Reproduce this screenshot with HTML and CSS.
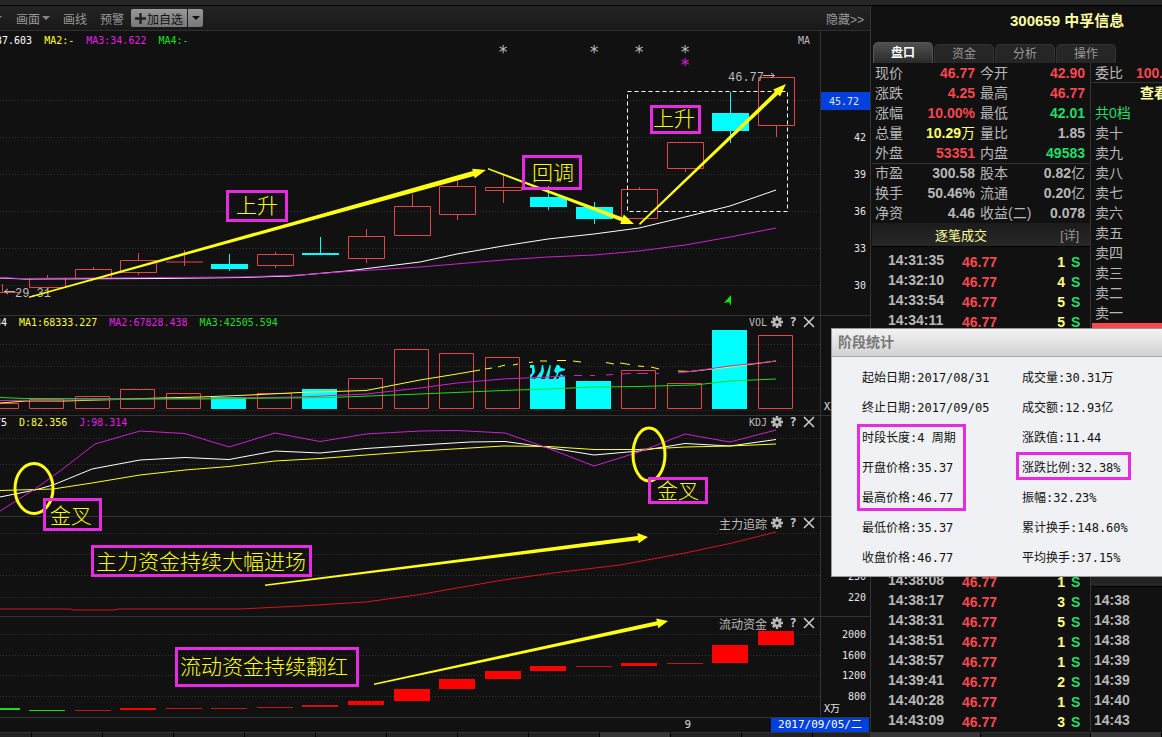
FILE: index.html
```
<!DOCTYPE html>
<html lang="zh-CN">
<head>
<meta charset="utf-8">
<title>300659 中孚信息</title>
<link rel="stylesheet" href="styles.css">
</head>
<body>
<svg class="defs" width="0" height="0" aria-hidden="true">
  <symbol id="gear" viewBox="0 0 12 12">
    <g stroke="#b8b8b8" stroke-width="2.4"><path d="M6 0V12M0 6H12M1.8 1.8L10.2 10.2M10.2 1.8L1.8 10.2"/></g>
    <circle cx="6" cy="6" r="4" fill="#b8b8b8"/><circle cx="6" cy="6" r="1.6" fill="#111"/>
  </symbol>
  <symbol id="close" viewBox="0 0 12 12"><path d="M1 1L11 11M11 1L1 11" stroke="#d0d0d0" stroke-width="1.5"/></symbol>
</svg>
<div class="app">
  <div class="strip"></div>
  <div class="workspace">
    <main class="left">
      <nav class="toolbar">
        <button class="tool first" aria-label="更多"><i class="caret"></i></button>
        <button class="tool draw">画面<i class="caret"></i></button>
        <button class="tool line">画线</button>
        <button class="tool">预警</button>
        <div class="split"><button class="add"><svg width="11" height="11" viewBox="0 0 11 11"><path d="M5.5 0V11M0 5.5H11" stroke="#222" stroke-width="2.4"/></svg>加自选</button><button class="drop" aria-label="选择分组"><i class="caret dark"></i></button></div>
        <button class="tool hide">隐藏&gt;&gt;</button>
      </nav>
      <div class="chart">
        <section class="pane">
          <div class="plot">
            <svg class="canvas tall" viewBox="0 31 820 284" preserveAspectRatio="xMaxYMin meet">
              <path class="grid" d="M0 100.5H820M0 137.5H820M0 174.5H820M0 211.5H820M0 248.5H820M0 285.5H820"/>
              <g class="up">
                <path d="M0 292.5H20M2.5 284V292"/>
                <path d="M29.500 278.500H65.500V287.500H29.500ZM47.500 275V278"/>
                <path d="M75.500 269.500H111.500V278.500H75.500ZM93.500 267V269"/>
                <path d="M120.500 260.500H156.500V272.500H120.500ZM138.500 253V260M138.500 273V275"/>
                <path d="M166 262H203M184.500 250V266"/>
                <path d="M257.500 254.500H293.500V265.500H257.500ZM275.500 252V254M275.500 266V268"/>
                <path d="M348.500 236.500H384.500V258.500H348.500ZM366.500 229V236M366.500 259V263"/>
                <path d="M394.500 206.500H430.500V235.500H394.500ZM412.500 194V206"/>
                <path d="M439.500 186.500H475.500V214.500H439.500ZM457.500 178V186M457.500 215V220"/>
                <path d="M485.500 187.500H521.500V190.500H485.500ZM503.500 175V187M503.500 191V203"/>
                <path d="M621.500 189.500H657.500V218.500H621.500ZM639.500 187V189"/>
                <path d="M667.500 142.500H703.500V168.500H667.500ZM685.500 169V172"/>
                <path d="M758.500 77.500H794.500V125.500H758.500ZM776.500 126V137"/>
              </g>
              <g class="down">
                <path d="M211 264H248V269H211ZM229 254H230V271H229Z"/>
                <path d="M302 253H339V255H302ZM320 237H321V254H320Z"/>
                <path d="M530 197H567V207H530ZM548 186H549V210H548Z"/>
                <path d="M576 207H613V219H576ZM594 202H595V224H594Z"/>
                <path d="M712 113H749V131H712ZM730 92H731V143H730Z"/>
              </g>
              <polyline class="ln white" points="0,278 25,279 160,278.500 240,277.500 290,276 347,271 420,262 457,254 503,246 548,239 594,234 639,228 685,217 730,206 776,190"/>
              <polyline class="ln violet" points="0,277.500 20,278.500 240,277 300,275 340,272 420,267 503,260 548,257 594,255 639,251 685,245 730,237 776,228"/>
              <g class="star"><text x="498" y="58">*</text><text x="589" y="58">*</text><text x="634" y="58">*</text><text x="680" y="58">*</text><text class="vio" x="680" y="71">*</text></g>
              <text class="mark" x="728" y="81">46.77</text><path class="markline" d="M763 75.500H774M771 73L774.500 75.500L771 78"/>
              <text class="mark" x="15" y="297">29.31</text><path class="markline" d="M15 291.500H4M8 289L4.500 291.500L8 294"/>
              <path d="M731 295V306L729 302L724 303Z" fill="#00f000"/>
            </svg>
            <header class="legend"><span class="cw cut3">37.603</span><span class="cy">MA2:-</span><span class="cm">MA3:34.622</span><span class="cg">MA4:-</span><b class="name end">MA</b></header>
          </div>
          <svg class="axis tall" viewBox="0 31 49 284">
            <rect x="0" y="92" width="49" height="18" fill="#0040dc"/>
            <text x="38" y="105">45.72</text><text x="45" y="141">42</text><text x="45" y="178">39</text><text x="45" y="215">36</text><text x="45" y="252">33</text><text x="45" y="289">30</text>
          </svg>
        </section>
        <section class="pane">
          <div class="plot">
            <svg class="canvas low" viewBox="0 316 820 99" preserveAspectRatio="xMaxYMin meet">
              <path class="grid" d="M0 344.500H820M0 366.500H820M0 388.500H820M0 410.500H820"/>
              <g class="up">
                <path d="M-16 403.500H18.500V408.500H-16Z"/><path d="M29.500 399.500H63.500V408.500H29.500Z"/>
                <path d="M75.500 396.500H109.500V408.500H75.500Z"/><path d="M120.500 389.500H154.500V408.500H120.500Z"/>
                <path d="M166.500 393.500H200.500V408.500H166.500Z"/><path d="M257.500 393.500H291.500V408.500H257.500Z"/>
                <path d="M348.500 378.500H382.500V408.500H348.500Z"/><path d="M394.500 349.500H428.500V408.500H394.500Z"/>
                <path d="M439.500 353.500H473.500V408.500H439.500Z"/><path d="M485.500 357.500H519.500V408.500H485.500Z"/>
                <path d="M621.500 370.500H655.500V408.500H621.500Z"/><path d="M667.500 383.500H701.500V408.500H667.500Z"/>
                <path d="M758.500 335.500H792.500V408.500H758.500Z"/>
              </g>
              <path class="down" d="M211 397H246V409H211ZM302 389H337V409H302ZM530 365H565V409H530ZM576 381H611V409H576ZM712 330H747V409H712Z"/>
              <path d="M529 368H532V373L529 376ZM534 364H542L541 371L535 379L531 378L535 372ZM543 364H550L547 373L545 379H541L544 371ZM551 364H557L554 371L557 374L553 379H549ZM558 364H566V369L561 368ZM559 372L566 370V378L561 374L558 379H556Z" fill="#111"/>
              <path d="M483 316H493M499 316H506M523 316H553M580 316H601M628 316H658M665 316H684" stroke="#220b0b" stroke-width="2"/>
              <polyline class="ln yellow" points="0,403 26,401 65,401 116,399.500 160,398 200,397 250,395 300,392.500 366,390.500 420,380 457,374 480,370"/>
              <path class="ln yellow" d="M485 369L492 368M498 367L505 365M513 365L518 364M529 362.500L533 362M540 361L547 361M557 360.500L566 360.500M573 361L581 362M606 362.500L614 364M620 363L630 364.500M638 366L644 366.500M651 367L659 369M678 371L690 371.500L730 367L776 361"/>
              <polyline class="ln violet" points="0,400.500 116,399.500 300,397 366,394 420,388 457,383 503,379 548,377 566,376"/>
              <path class="ln violet" d="M574 375.500H582M590 375.500H595M606 375L613 374.500M621 374L631 373.500M637 373.500H648M656 373.500H659M678 373L690 371.500L730 366L776 361"/>
              <polyline class="ln green" points="0,397.500 25,398.500 200,399 330,397.500 420,394 503,390.500 548,389 594,387 639,386.500 695,385 730,381 776,379"/>
            </svg>
            <header class="legend"><span class="cw cut5">34</span><span class="cy">MA1:68333.227</span><span class="cm">MA2:67828.438</span><span class="cg">MA3:42505.594</span>
              <div class="ctl end"><span class="name">VOL</span><button aria-label="设置"><svg><use href="#gear"/></svg></button><button aria-label="帮助">?</button><button aria-label="关闭"><svg><use href="#close"/></svg></button></div></header>
          </div>
          <svg class="axis low" viewBox="0 316 49 99"><text class="start" x="3" y="410">X万</text></svg>
        </section>
        <section class="pane">
          <div class="plot">
            <svg class="canvas mid" viewBox="0 416 820 100" preserveAspectRatio="xMaxYMin meet">
              <path class="grid" d="M0 438.500H820M0 464.500H820M0 492.500H820"/>
              <polyline class="ln white" points="0,497 35,490 53,485 92,469 140,460 185,457.500 229,459.500 275,451 320,453 366,448.500 420,445 470,442 505,441.500 545,447 594,455 639,451 685,443.500 730,446 776,439.500"/>
              <polyline class="ln yellow" points="0,490.500 53,489 92,483 140,475 185,470 229,466.500 275,461 320,458.500 366,455 420,451 503,446 548,446.500 594,449.500 639,449.500 685,447 730,446 776,444"/>
              <polyline class="ln violet" points="0,511 35,489 60,471 95,444 140,431 185,433.500 229,447 275,433 320,441.500 366,434 420,431 457,430.500 505,433 545,447 594,466 639,452 685,434 730,442 776,430"/>
            </svg>
            <header class="legend"><span class="cw cut5">75</span><span class="cy">D:82.356</span><span class="cm">J:98.314</span>
              <div class="ctl end"><span class="name">KDJ</span><button aria-label="设置"><svg><use href="#gear"/></svg></button><button aria-label="帮助">?</button><button aria-label="关闭"><svg><use href="#close"/></svg></button></div></header>
          </div>
          <svg class="axis mid" viewBox="0 416 49 100"></svg>
        </section>
        <section class="pane">
          <div class="plot">
            <svg class="canvas low" viewBox="0 517 820 99" preserveAspectRatio="xMaxYMin meet">
              <path class="grid" d="M0 533.500H820M0 554.500H820M0 575.500H820M0 597.500H820"/>
              <polyline class="ln red" points="0,609 70,609 74,610 114,610 118,609 240,609 300,606 366,602 420,594.500 457,588 503,580 553,573 620,565 685,553 730,543.500 776,532"/>
            </svg>
            <header class="legend"><div class="ctl end"><span class="name cjk">主力追踪</span><button aria-label="设置"><svg><use href="#gear"/></svg></button><button aria-label="帮助">?</button><button aria-label="关闭"><svg><use href="#close"/></svg></button></div></header>
          </div>
          <svg class="axis low" viewBox="0 517 49 99"><text x="45" y="580">230</text><text x="45" y="601">220</text></svg>
        </section>
        <section class="pane">
          <div class="plot">
            <svg class="canvas mid" viewBox="0 617 820 100" preserveAspectRatio="xMaxYMin meet">
              <path class="grid" d="M0 634.500H820M0 655.500H820M0 675.500H820M0 696.500H820"/>
              <path d="M0 708H20V710H0ZM29 710H65V711H29Z" fill="#1bdd1b"/>
              <path d="M75 710H111V711H75ZM166 708H202V709H166ZM211 708H247V709H211ZM257 707H293V708H257ZM302 705H338V707H302ZM576 666H612V667H576ZM667 663H703V664H667Z" fill="#c81414"/>
              <path d="M120 708H156V710H120ZM348 701H384V705H348ZM394 689H430V701H394ZM439 679H475V689H439ZM485 671H521V679H485ZM530 666H566V671H530ZM621 663H657V666H621ZM712 645H748V663H712ZM758 631H794V645H758Z" fill="#f00"/>
            </svg>
            <header class="legend"><div class="ctl end"><span class="name cjk">流动资金</span><button aria-label="设置"><svg><use href="#gear"/></svg></button><button aria-label="帮助">?</button><button aria-label="关闭"><svg><use href="#close"/></svg></button></div></header>
          </div>
          <svg class="axis mid" viewBox="0 617 49 100"><text x="45" y="638">2000</text><text x="45" y="659">1600</text><text x="45" y="679">1200</text><text x="45" y="700">800</text><text class="start" x="3" y="712">X万</text></svg>
        </section>
        <svg class="notes" viewBox="0 31 820 686" preserveAspectRatio="xMaxYMin meet">
          <rect x="627.500" y="91.500" width="160" height="120" fill="none" stroke="#fff" stroke-dasharray="4 3"/>
          <g fill="#ffff14">
            <polygon points="29,296.500 472.800,171.100 472.200,168.700 486,170 474.800,178.300 474.100,175.900 29,297.900"/>
            <polygon points="488,168 622.700,217.400 623.800,214.600 634,224 620.200,224 621.300,221.200 488,169.500"/>
            <polygon points="639,223.500 775.200,91.600 773.100,89.400 786,84 780,96.600 778,94.400 640,225"/>
            <polygon points="265,584.500 637.800,536 637.400,533 648,537 638.600,543.200 638.200,540.200 265,586"/>
            <polygon points="374,683.500 656.900,621.300 656.200,618.400 668,621 658.300,628.200 657.700,625.300 374,685"/>
          </g>
          <g fill="none" stroke="#ffff14" stroke-width="3"><ellipse cx="34" cy="488.500" rx="19" ry="25"/><ellipse cx="649" cy="454.500" rx="16" ry="26.500"/></g>
          <g fill="none" stroke="#e62be0" stroke-width="3">
            <rect x="227.500" y="191.500" width="59" height="29"/><rect x="651.500" y="106.500" width="48" height="26"/>
            <rect x="523.500" y="156.500" width="57" height="32"/><rect x="44.500" y="499.500" width="56" height="30"/>
            <rect x="649.500" y="478.500" width="57" height="24"/><rect x="92.500" y="546.500" width="218" height="29"/>
            <rect x="176.500" y="648.500" width="181" height="37"/>
          </g>
          <g class="memo">
            <text x="236" y="213">上升</text><text x="653" y="126">上升</text><text x="532" y="180">回调</text>
            <text x="50" y="523">金叉</text><text x="657" y="498">金叉</text>
            <text x="96" y="569">主力资金持续大幅进场</text><text x="180" y="674">流动资金持续翻红</text>
          </g>
        </svg>
      </div>
      <div class="dates"><span class="month">9</span><span class="today">2017/09/05/二</span></div>
    </main>
    <aside class="side">
      <h1>300659 中孚信息</h1>
      <nav class="tabs"><button class="on">盘口</button><button>资金</button><button>分析</button><button>操作</button></nav>
      <div class="cols">
        <div class="info">
          <table class="quote">
            <tbody>
            <tr><th>现价</th><td class="r">46.77</td><th>今开</th><td class="r">42.90</td></tr>
            <tr><th>涨跌</th><td class="r">4.25</td><th>最高</th><td class="r">46.77</td></tr>
            <tr><th>涨幅</th><td class="r">10.00%</td><th>最低</th><td class="g">42.01</td></tr>
            <tr><th>总量</th><td class="y">10.29<i>万</i></td><th>量比</th><td>1.85</td></tr>
            <tr><th>外盘</th><td class="r">53351</td><th>内盘</th><td class="g">49583</td></tr>
            </tbody>
            <tbody class="rule">
            <tr><th>市盈</th><td>300.58</td><th>股本</th><td>0.82<i>亿</i></td></tr>
            <tr><th>换手</th><td>50.46%</td><th>流通</th><td>0.20<i>亿</i></td></tr>
            <tr><th>净资</th><td>4.46</td><th>收益(二)</th><td>0.078</td></tr>
            </tbody>
          </table>
          <div class="ticks-head"><h2>逐笔成交</h2><a href="#">[详]</a></div>
          <table class="ticks">
            <tr><td>14:31:35</td><td>46.77</td><td>1</td><td>S</td></tr>
            <tr><td>14:32:10</td><td>46.77</td><td>4</td><td>S</td></tr>
            <tr><td>14:33:54</td><td>46.77</td><td>5</td><td>S</td></tr>
            <tr><td>14:34:11</td><td>46.77</td><td>5</td><td>S</td></tr>
          </table>
          <table class="ticks later">
            <tr><td>14:38:08</td><td>46.77</td><td>1</td><td>S</td></tr>
            <tr><td>14:38:17</td><td>46.77</td><td>3</td><td>S</td></tr>
            <tr><td>14:38:31</td><td>46.77</td><td>5</td><td>S</td></tr>
            <tr><td>14:38:51</td><td>46.77</td><td>1</td><td>S</td></tr>
            <tr><td>14:38:57</td><td>46.77</td><td>1</td><td>S</td></tr>
            <tr><td>14:39:41</td><td>46.77</td><td>2</td><td>S</td></tr>
            <tr><td>14:40:28</td><td>46.77</td><td>1</td><td>S</td></tr>
            <tr><td>14:43:09</td><td>46.77</td><td>3</td><td>S</td></tr>
          </table>
        </div>
        <div class="book">
          <div class="ratio"><span>委比</span><b>100.</b></div>
          <a class="view" href="#">查看</a>
          <ul><li class="g">共0档</li><li>卖十</li><li>卖九</li><li>卖八</li><li>卖七</li><li>卖六</li><li>卖五</li><li>卖四</li><li>卖三</li><li>卖二</li><li>卖一</li></ul>
          <div class="bar"></div>
          <div class="book-head"></div>
          <ul class="times"><li>14:38</li><li>14:38</li><li>14:38</li><li>14:39</li><li>14:39</li><li>14:40</li><li>14:43</li></ul>
        </div>
      </div>
    </aside>
  </div>
  <div class="foot">
    <div class="foot-left"><i></i><i></i><i></i><i></i><i></i><i></i><i></i><i></i><i></i><i class="lit"></i><i></i><i></i><i></i></div>
    <div class="foot-right"><i class="lit wide"></i><i class="wide"></i><i class="lit"></i></div>
  </div>
  <section class="dialog" role="dialog" aria-label="阶段统计">
    <h2>阶段统计</h2>
    <div class="stats">
      <span>起始日期:2017/08/31</span><span>成交量:30.31万</span>
      <span>终止日期:2017/09/05</span><span>成交额:12.93亿</span>
      <span>时段长度:4 周期</span><span>涨跌值:11.44</span>
      <span>开盘价格:35.37</span><span>涨跌比例:32.38%</span>
      <span>最高价格:46.77</span><span>振幅:32.23%</span>
      <span>最低价格:35.37</span><span>累计换手:148.60%</span>
      <span>收盘价格:46.77</span><span>平均换手:37.15%</span>
    </div>
    <div class="frame prices"></div>
    <div class="frame change"></div>
  </section>
</div>
</body>
</html>
```
FILE: styles.css
```
* { box-sizing: border-box; }
body {
  margin: 0;
  background: #111;
  color: #b8b8b8;
  font-family: "Liberation Sans", "Noto Sans CJK SC", sans-serif;
  font-size: 14px;
}
button { padding: 0; border: 0; background: none; color: inherit; font: inherit; }
a { color: inherit; text-decoration: none; }
ul { margin: 0; padding: 0; list-style: none; }
h1, h2 { margin: 0; }
i { font-style: normal; }
svg { display: block; }
.defs { position: absolute; }

.app { position: relative; display: flex; flex-direction: column; height: 100vh; overflow: hidden; }
.strip { flex: none; height: 6px; background: #262626; border-bottom: 1px solid #000; }
.workspace { display: flex; flex: 1; min-height: 0; }
.left { flex: 1; min-width: 0; border-right: 1px solid #333; }

/* toolbar */
.toolbar {
  display: flex; align-items: center; height: 25px;
  background: linear-gradient(#242424, #191919);
  border-bottom: 1px solid #303030;
  font-size: 12px; color: #999;
}
.tool { display: flex; align-items: center; gap: 2px; margin-right: 14px; }
.tool.first { width: 2px; overflow: hidden; justify-content: flex-end; }
.tool.draw, .tool.line { margin-right: 13px; }
.tool.hide { margin: 0 6px 0 auto; }
.caret { border: 4px solid transparent; border-top-color: #888; border-bottom: 0; }
.caret.dark { border-top-color: #111; }
.split { display: flex; gap: 1px; margin-left: -7px; height: 18px; }
.add, .drop {
  display: flex; align-items: center; justify-content: center;
  background: linear-gradient(#999, #777); color: #111; border-radius: 2px 0 0 2px;
}
.add { width: 56px; gap: 1px; }
.add svg { flex: none; }
.drop { width: 15px; border-radius: 0 2px 2px 0; }

/* chart panes */
.chart { position: relative; }
.pane { display: grid; grid-template-columns: minmax(0, 1fr) 50px; border-bottom: 1px solid #333; }
.plot { display: grid; }
.canvas, .legend { grid-area: 1 / 1; }
.canvas { width: 100%; }
.tall { height: 284px; }
.mid { height: 100px; }
.low { height: 99px; }
.axis { width: 50px; border-left: 1px solid #333; }
.axis text {
  font: 10px "DejaVu Sans Mono", "Noto Sans CJK SC", monospace;
  fill: #e4e4e4; text-anchor: end;
}
.axis .start { text-anchor: start; }
.legend {
  display: flex; align-items: center; align-self: start; gap: 12px; height: 12px;
  padding-right: 5px;
  font: 10px "DejaVu Sans Mono", "Noto Sans CJK SC", monospace; white-space: nowrap;
}
.tall + .legend { margin-top: 3px; padding-right: 10px; }
.end { margin-left: auto; }
.cut3 { margin-left: -4px; }
.cut5 { margin-left: -5px; }
.cw { color: #fff; }
.cy { color: #ff3; }
.cm { color: #e020e0; }
.cg { color: #1de01d; }
.name { font-weight: normal; color: #bbb; }
.cjk { font-size: 12px; }
.ctl { display: flex; align-items: center; gap: 4px; }
.ctl button { width: 12px; height: 12px; font-weight: bold; font-size: 12px; line-height: 12px; color: #ccc; }
.ctl svg { width: 12px; height: 12px; }
.grid { fill: none; stroke: #303030; stroke-dasharray: 1 2; }
.up { fill: none; stroke: #e04848; }
.down { fill: #0ff; }
.ln { fill: none; stroke-width: 1; }
.white { stroke: #fff; }
.yellow { stroke: #ff2; }
.violet { stroke: #d01fd0; }
.green { stroke: #18e018; }
.red { stroke: #d81420; }
.star text { font: 17px "DejaVu Sans Mono", monospace; fill: #bbb; }
.star .vio { fill: #d01fd0; }
.mark { font: 12px "Liberation Mono", monospace; fill: #bbb; }
.markline { fill: none; stroke: #bbb; }
.notes { position: absolute; top: 0; left: 0; width: calc(100% - 50px); height: 686px; pointer-events: none; }
.memo { font: 300 21px "Noto Sans CJK SC", sans-serif; fill: #ffff14; }

.dates {
  display: flex; justify-content: flex-end; gap: 80px; height: 14px;
  font: 11px/14px "DejaVu Sans Mono", "Noto Sans CJK SC", monospace; color: #ddd;
}
.today { width: 98px; margin-right: 1px; background: #0040dc; color: #fff; text-align: center; }

/* quote side panel */
.side { flex: none; display: flex; flex-direction: column; width: 291px; padding-left: 1px; overflow: hidden; }
.side h1 { height: 36px; padding-left: 138px; font-size: 15px; line-height: 30px; color: #ffffa0; white-space: nowrap; }
.tabs { display: flex; align-items: flex-end; gap: 1px; height: 21px; padding-left: 1px; }
.tabs button {
  width: 60px; height: 19px; font-size: 12px; line-height: 18px; color: #999;
  background: #262626; border: 1px solid #333; border-bottom: 0; border-radius: 5px 5px 0 0;
}
.tabs .on { height: 21px; color: #fff; font-weight: bold; background: linear-gradient(#505050, #2a2a2a); border-color: #555; }
.cols { display: flex; flex: 1; min-height: 0; }
.info { flex: none; display: flex; flex-direction: column; width: 219px; border-right: 1px solid #333; }
.quote, .ticks { border-collapse: collapse; table-layout: fixed; width: 100%; font-weight: bold; }
.quote tr, .ticks tr { height: 20px; }
.quote td, .quote th { padding: 0; line-height: 18px; white-space: nowrap; }
.quote th { width: 32px; padding-left: 3px; text-align: left; font-weight: normal; }
.quote td { text-align: right; }
.quote th:nth-child(3) { padding-left: 5px; width: 59px; }
.quote td:nth-child(2) { width: 71px; }
.quote td:nth-child(4) { padding-right: 5px; }
.quote i { font-weight: normal; }
.rule { border-top: 1px solid #333; }
.r { color: #f8474f; }
.g { color: #22dd66; }
.y { color: #ffff70; }
.ticks-head {
  flex: none; display: flex; align-items: center; height: 24px;
  padding: 0 11px 0 63px; justify-content: space-between;
  background: linear-gradient(#1c1c1c, #272727); border-bottom: 1px solid #000;
}
.ticks-head h2 { font-size: 13px; font-weight: normal; color: #ffffa0; }
.ticks-head a { font-size: 12px; color: #999; }
.ticks { margin-top: 5px; }
.later { margin-top: auto; }
.ticks td { padding: 0; line-height: 16px; vertical-align: top; }
.ticks td:nth-child(1) { width: 90px; padding-left: 16px; }
.ticks td:nth-child(n+2) { padding-top: 2px; }
.ticks td:nth-child(2) { width: 72px; color: #f8474f; }
.ticks td:nth-child(3) { width: 31px; text-align: right; color: #ffff80; }
.ticks td:nth-child(4) { padding-left: 6px; color: #22dd66; }
.book { flex: 1; display: flex; flex-direction: column; min-width: 0; overflow: hidden; white-space: nowrap; line-height: 20px; }
.ratio { display: flex; gap: 13px; height: 20px; padding-left: 4px; border-bottom: 1px solid #333; }
.ratio b { color: #f8474f; }
.view { height: 20px; padding-left: 49px; font-weight: bold; color: #ffffa0; }
.book ul { padding-left: 4px; }
.book li { height: 20px; }
.bar { flex: none; height: 8px; margin-left: 1px; background: #f8474f; }
.book-head { flex: none; height: 20px; margin-top: auto; background: linear-gradient(#1c1c1c, #272727); border-bottom: 1px solid #000; }
.book .times { padding: 3px 0 2px 3px; font-weight: bold; }

/* bottom tab strip */
.foot { flex: none; display: flex; height: 5px; }
.foot i { flex: none; width: 71px; background: #222; border-top: 1px solid #333; border-right: 1px solid #000; }
.foot .lit { background: #363636; }
.foot-left { display: flex; flex: 1; min-width: 0; overflow: hidden; border-right: 1px solid #333; }
.foot-left i:first-child { width: 32px; }
.foot-right { display: flex; flex: none; width: 291px; overflow: hidden; }
.foot .wide { width: 110px; }

/* interval statistics */
.dialog {
  position: absolute; right: 0; top: 328px; width: 331px; height: 249px;
  background: #eff1f4; border: 1px solid #999; border-right: 0; color: #111;
}
.dialog h2 {
  height: 28px; padding-left: 6px; font-size: 14px; line-height: 27px; color: #777;
  background: linear-gradient(#f2f2f2, #d2d2d2); border-bottom: 1px solid #aaa;
}
.stats {
  display: grid; grid-template-columns: 160px 1fr; grid-auto-rows: 30px; align-items: center;
  padding: 4px 0 0 30px; white-space: nowrap;
  font: 12px "DejaVu Sans Mono", "Noto Sans CJK SC", monospace;
}
.frame { position: absolute; border: 3px solid #e62be0; }
.prices { left: 25px; top: 95px; width: 109px; height: 87px; }
.change { left: 184px; top: 123px; width: 115px; height: 28px; }
```
